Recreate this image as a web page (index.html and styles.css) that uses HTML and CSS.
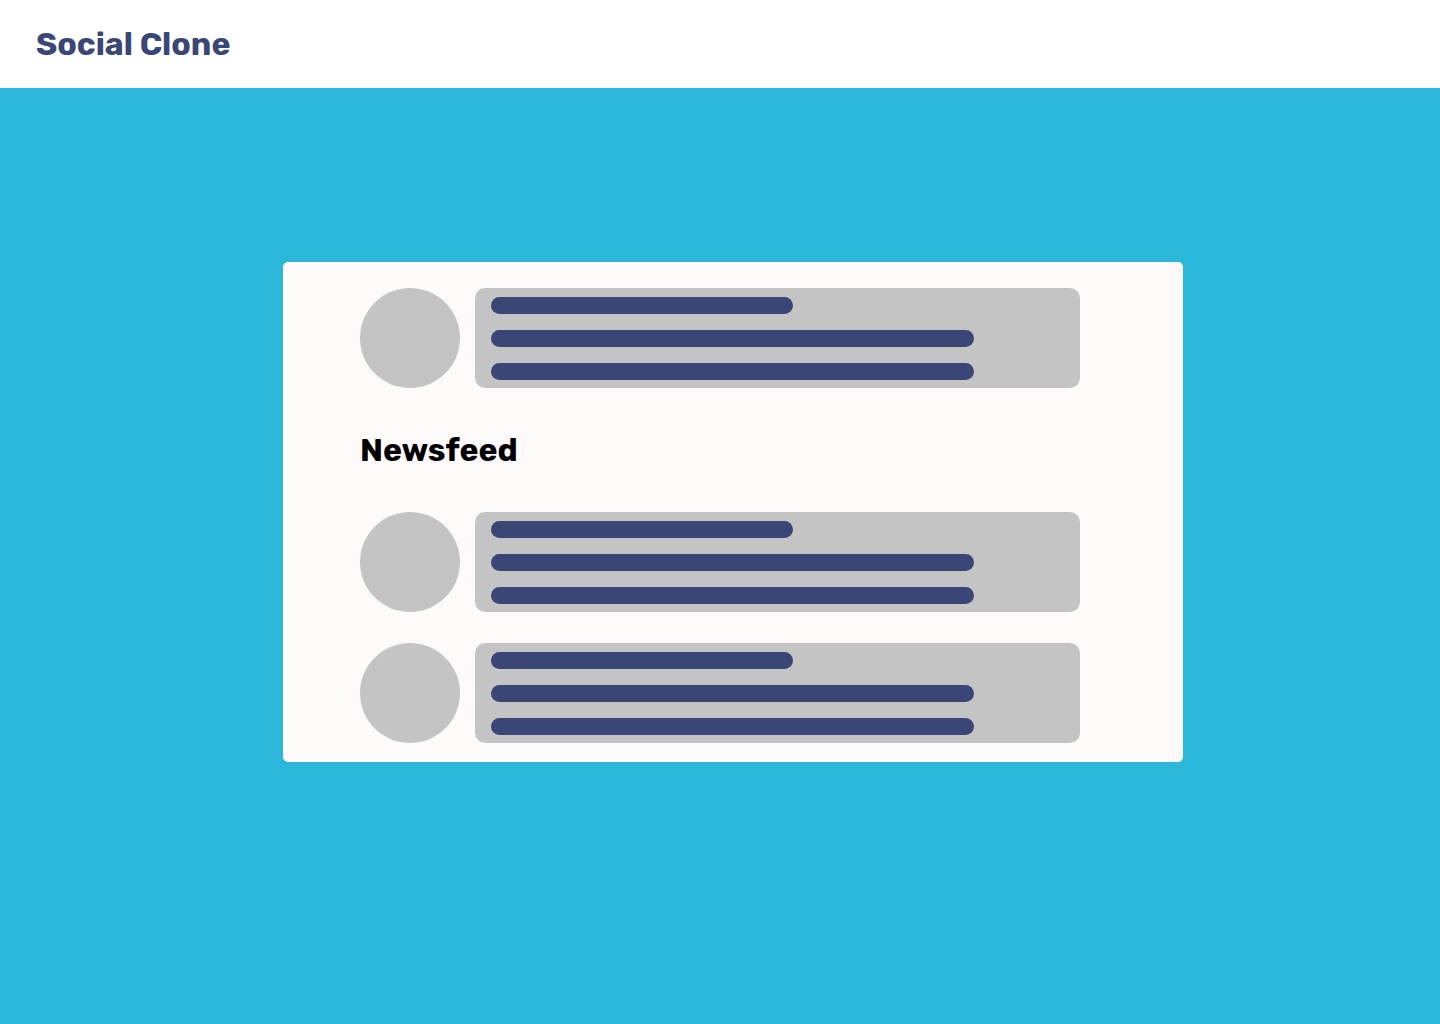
FILE: index.html
```html
<!DOCTYPE html>
<html lang="en">
<head>
  <meta charset="utf-8">
  <meta name="viewport" content="width=device-width, initial-scale=1">
  <title>Social Clone</title>
  <link rel="stylesheet" href="styles.css">
</head>
<body>
  <header class="topbar">
    <h1 class="brand">Social Clone</h1>
  </header>
  <main class="page">
    <section class="panel">
      <article class="post">
        <div class="avatar"></div>
        <div class="bubble">
          <div class="line line-short"></div>
          <div class="line"></div>
          <div class="line"></div>
        </div>
      </article>
      <h2 class="feed-title">Newsfeed</h2>
      <div class="feed">
        <article class="post">
          <div class="avatar"></div>
          <div class="bubble">
            <div class="line line-short"></div>
            <div class="line"></div>
            <div class="line"></div>
          </div>
        </article>
        <article class="post">
          <div class="avatar"></div>
          <div class="bubble">
            <div class="line line-short"></div>
            <div class="line"></div>
            <div class="line"></div>
          </div>
        </article>
      </div>
    </section>
  </main>
</body>
</html>
```

FILE: styles.css
```css
* {
  box-sizing: border-box;
}

body {
  margin: 0;
  min-height: 100vh;
  display: flex;
  flex-direction: column;
  background: #2ab7da;
  font-family: Rubik, Inter, "Liberation Sans", sans-serif;
}

.topbar {
  padding: 24px 36px;
  background: #fff;
}

.brand,
.feed-title {
  margin: 0;
  font-size: 32px;
  line-height: 40px;
  font-weight: 700;
}

.brand {
  color: #394676;
}

.page {
  padding: 174px 16px 40px 42px;
}

.panel {
  max-width: 900px;
  margin: 0 auto;
  padding: 26px 103px 19px 77px;
  border-radius: 5px;
  background: #fffafa;
}

.feed-title {
  padding: 42px 0;
  color: #000;
}

.feed {
  display: flex;
  flex-direction: column;
  gap: 31px;
}

.post {
  display: flex;
  gap: 15px;
}

.avatar {
  flex: none;
  width: 100px;
  height: 100px;
  border-radius: 50%;
  background: #c4c4c4;
}

.bubble {
  flex: 1;
  display: flex;
  flex-direction: column;
  gap: 16px;
  padding: 9px 16px 8px;
  border-radius: 10px;
  background: #c4c4c4;
}

.line {
  width: 100%;
  max-width: 483px;
  height: 17px;
  border-radius: 10px;
  background: #394676;
}

.line-short {
  max-width: 302px;
}
```
